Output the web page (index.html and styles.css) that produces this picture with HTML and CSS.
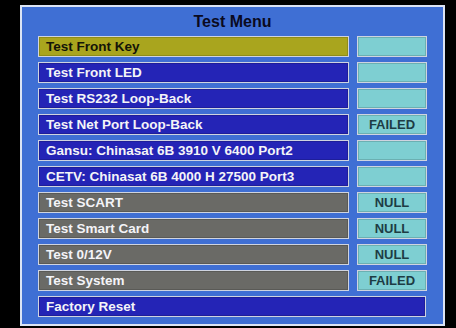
FILE: index.html
```html
<!DOCTYPE html>
<html lang="en">
<head>
    <meta charset="UTF-8">
    <title>Test Menu</title>
    <link rel="stylesheet" href="styles.css">
</head>
<body>
    <div class="menu">
        <h1>Test Menu</h1>
        <div class="list">
            <div class="item selected">Test Front Key</div>
            <div class="status"></div>

            <div class="item">Test Front LED</div>
            <div class="status"></div>

            <div class="item">Test RS232 Loop-Back</div>
            <div class="status"></div>

            <div class="item">Test Net Port Loop-Back</div>
            <div class="status">FAILED</div>

            <div class="item">Gansu: Chinasat 6B 3910 V 6400 Port2</div>
            <div class="status"></div>

            <div class="item">CETV: Chinasat 6B 4000 H 27500 Port3</div>
            <div class="status"></div>

            <div class="item off">Test SCART</div>
            <div class="status">NULL</div>

            <div class="item off">Test Smart Card</div>
            <div class="status">NULL</div>

            <div class="item off">Test 0/12V</div>
            <div class="status">NULL</div>

            <div class="item off">Test System</div>
            <div class="status">FAILED</div>

            <div class="item wide">Factory Reset</div>
        </div>
    </div>
</body>
</html>
```

FILE: styles.css
```css
body {
    margin: 0;
    width: 456px;
    height: 328px;
    overflow: hidden;
    background-color: #000;
    font-family: "Liberation Sans", Arial, sans-serif;
}
.menu {
    box-sizing: border-box;
    width: 425px;
    height: 321px;
    margin: 5px 0 0 20px;
    padding: 0 16px;
    background-color: #3f6fd4;
    border: 2px solid #dce4f4;
}
h1 {
    margin: 0;
    height: 29px;
    line-height: 29px;
    font-size: 16px;
    text-align: center;
    color: #0a0a1e;
}
.list {
    display: grid;
    grid-template-columns: 311px 70px;
    grid-auto-rows: 21px;
    column-gap: 8px;
    row-gap: 5px;
}
.item, .status {
    box-sizing: border-box;
    border: 1px solid #cfd4e0;
    box-shadow: inset 0 0 0 1px rgba(0, 0, 0, 0.15);
    font-size: 13.5px;
    font-weight: bold;
    line-height: 19px;
    white-space: nowrap;
}
.item {
    padding-left: 7px;
    background-color: #2424b6;
    color: #f4f4f8;
}
.item.selected {
    background-color: #a9a51e;
    color: #141408;
}
.item.off {
    background-color: #6a6a66;
}
.item.wide {
    grid-column: 1 / -1;
    margin-right: 1px;
}
.status {
    background-color: #7ecfd2;
    color: #1d3c44;
    text-align: center;
    font-size: 13px;
}
```
